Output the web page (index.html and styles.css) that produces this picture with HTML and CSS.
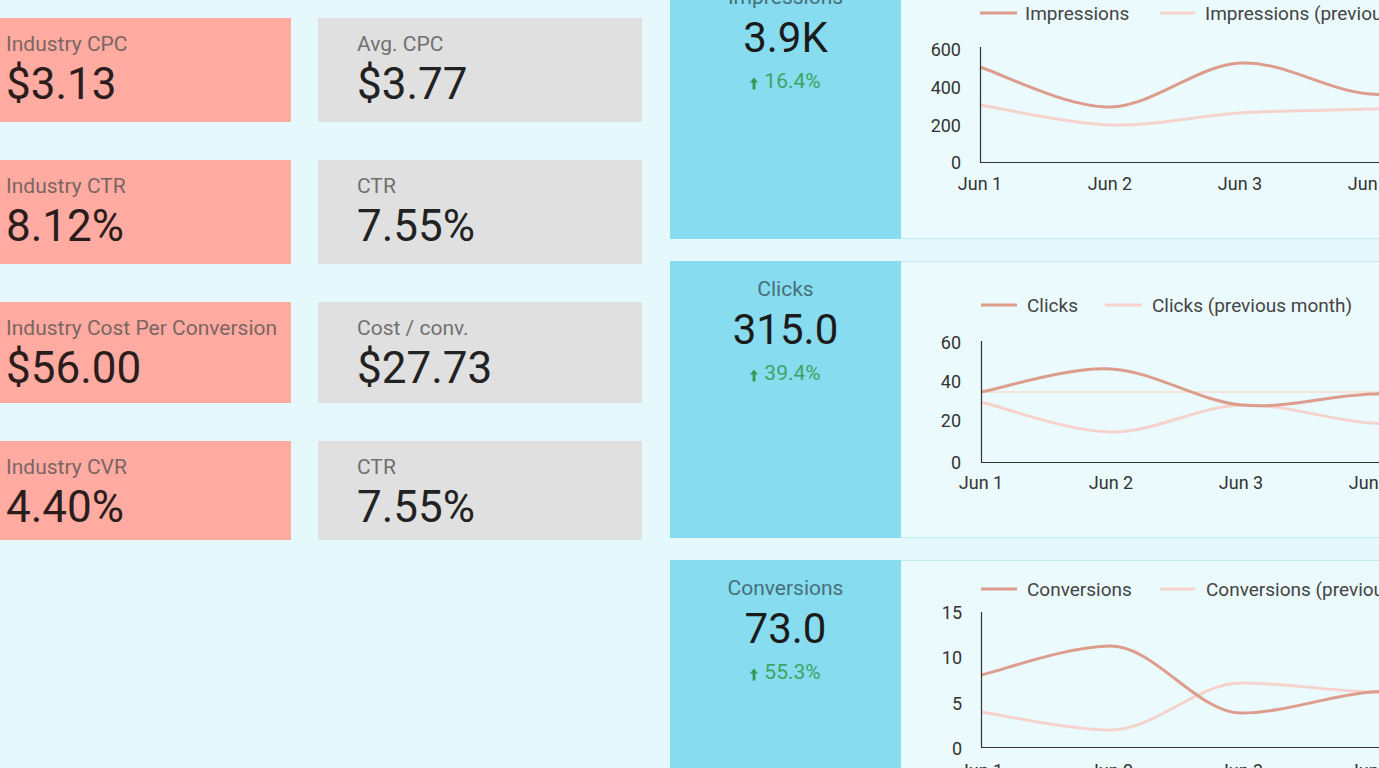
FILE: index.html
```html
<!DOCTYPE html>
<html lang="en">
<head>
<meta charset="utf-8">
<title>Benchmarks</title>
<link rel="stylesheet" href="styles.css">
</head>
<body>
<div class="page">
  <section class="benchmarks">
    <div class="card card-industry"><div class="card-label">Industry CPC</div><div class="card-value">$3.13</div></div>
    <div class="card card-account"><div class="card-label">Avg. CPC</div><div class="card-value">$3.77</div></div>
    <div class="card card-industry"><div class="card-label">Industry CTR</div><div class="card-value">8.12%</div></div>
    <div class="card card-account"><div class="card-label">CTR</div><div class="card-value">7.55%</div></div>
    <div class="card card-industry"><div class="card-label">Industry Cost Per Conversion</div><div class="card-value">$56.00</div></div>
    <div class="card card-account"><div class="card-label">Cost / conv.</div><div class="card-value">$27.73</div></div>
    <div class="card card-industry"><div class="card-label">Industry CVR</div><div class="card-value">4.40%</div></div>
    <div class="card card-account"><div class="card-label">CTR</div><div class="card-value">7.55%</div></div>
  </section>

  <section class="metrics">
    <div class="metric">
      <div class="scorecard scorecard-first">
        <div class="sc-label">Impressions</div>
        <div class="sc-value">3.9K</div>
        <div class="sc-delta"><svg class="arrow" viewBox="0 0 8 12" width="8" height="13"><path d="M4 0 L8 5 H5.4 V12 H2.6 V5 H0 Z"/></svg><span>16.4%</span></div>
      </div>
      <div class="chart">
        <svg class="plot" width="478" height="277" viewBox="0 0 478 277">
          <line class="leg-cur" x1="79" y1="51" x2="116" y2="51"/>
          <text class="legend" x="124" y="51">Impressions</text>
          <line class="leg-prev" x1="259" y1="51" x2="294" y2="51"/>
          <text class="legend" x="304" y="51">Impressions (previous month)</text>
          <text class="tick" x="60" y="87" text-anchor="end">600</text>
          <text class="tick" x="60" y="125" text-anchor="end">400</text>
          <text class="tick" x="60" y="163" text-anchor="end">200</text>
          <text class="tick" x="60" y="200" text-anchor="end">0</text>
          <path class="prev" d="M79,143 C101,146.3 166,161.7 209,163 C252,164.3 296,153.7 339,151 C382,148.3 426,148.2 469,147 C512,145.8 556,144 599,144"/>
          <path class="cur" d="M79,105 C101,112 166,145.7 209,145 C252,144.3 296,103.3 339,101 C382,98.7 426,128.8 469,132 C512,135.2 556,120 599,120"/>
          <path class="axis" d="M79.5,85 V200.5 H478"/>
          <text class="tick" x="79" y="221" text-anchor="middle">Jun 1</text>
          <text class="tick" x="209" y="221" text-anchor="middle">Jun 2</text>
          <text class="tick" x="339" y="221" text-anchor="middle">Jun 3</text>
          <text class="tick" x="469" y="221" text-anchor="middle">Jun 4</text>
        </svg>
      </div>
    </div>

    <div class="metric">
      <div class="scorecard">
        <div class="sc-label">Clicks</div>
        <div class="sc-value">315.0</div>
        <div class="sc-delta"><svg class="arrow" viewBox="0 0 8 12" width="8" height="13"><path d="M4 0 L8 5 H5.4 V12 H2.6 V5 H0 Z"/></svg><span>39.4%</span></div>
      </div>
      <div class="chart">
        <svg class="plot" width="478" height="277" viewBox="0 0 478 277">
          <line class="leg-cur" x1="80" y1="44" x2="116" y2="44"/>
          <text class="legend" x="126" y="44">Clicks</text>
          <line class="leg-prev" x1="204" y1="44" x2="241" y2="44"/>
          <text class="legend" x="251" y="44">Clicks (previous month)</text>
          <text class="tick" x="60" y="81" text-anchor="end">60</text>
          <text class="tick" x="60" y="120" text-anchor="end">40</text>
          <text class="tick" x="60" y="159" text-anchor="end">20</text>
          <text class="tick" x="60" y="201" text-anchor="end">0</text>
          <line class="ref" x1="80" y1="131" x2="478" y2="131"/>
          <path class="prev" d="M80,141 C101.7,146 166.7,170.5 210,171 C253.3,171.5 296.7,145.5 340,144 C383.3,142.5 426.7,159.3 470,162 C513.3,164.7 556.7,160 600,160"/>
          <path class="cur" d="M80,131 C101.7,127.2 166.7,105.8 210,108 C253.3,110.2 296.7,139.8 340,144 C383.3,148.2 426.7,134.8 470,133 C513.3,131.2 556.7,133 600,133"/>
          <path class="axis" d="M80.5,80 V201.5 H478"/>
          <text class="tick" x="80" y="221" text-anchor="middle">Jun 1</text>
          <text class="tick" x="210" y="221" text-anchor="middle">Jun 2</text>
          <text class="tick" x="340" y="221" text-anchor="middle">Jun 3</text>
          <text class="tick" x="470" y="221" text-anchor="middle">Jun 4</text>
        </svg>
      </div>
    </div>

    <div class="metric">
      <div class="scorecard">
        <div class="sc-label">Conversions</div>
        <div class="sc-value">73.0</div>
        <div class="sc-delta"><svg class="arrow" viewBox="0 0 8 12" width="8" height="13"><path d="M4 0 L8 5 H5.4 V12 H2.6 V5 H0 Z"/></svg><span>55.3%</span></div>
      </div>
      <div class="chart">
        <svg class="plot" width="478" height="277" viewBox="0 0 478 277">
          <line class="leg-cur" x1="80" y1="29" x2="116" y2="29"/>
          <text class="legend" x="126" y="29">Conversions</text>
          <line class="leg-prev" x1="259" y1="29" x2="294" y2="29"/>
          <text class="legend" x="305" y="29">Conversions (previous month)</text>
          <text class="tick" x="61" y="52" text-anchor="end">15</text>
          <text class="tick" x="61" y="97" text-anchor="end">10</text>
          <text class="tick" x="61" y="143" text-anchor="end">5</text>
          <text class="tick" x="61" y="188" text-anchor="end">0</text>
          <path class="prev" d="M80,152 C101.7,155 166.7,170 210,170 C253.3,170 296.7,123 340,123 C383.3,123 426.7,130.5 470,132 C513.3,133.5 556.7,132 600,132"/>
          <path class="cur" d="M80,115 C101.7,110.2 166.7,86 210,86 C253.3,86 296.7,153 340,153 C383.3,153 426.7,135.8 470,132 C513.3,128.2 556.7,130 600,130"/>
          <path class="axis" d="M80.5,52 V187.5 H478"/>
          <text class="tick" x="80" y="210" text-anchor="middle">Jun 1</text>
          <text class="tick" x="210" y="210" text-anchor="middle">Jun 2</text>
          <text class="tick" x="340" y="210" text-anchor="middle">Jun 3</text>
          <text class="tick" x="470" y="210" text-anchor="middle">Jun 4</text>
        </svg>
      </div>
    </div>
  </section>
</div>
</body>
</html>
```

FILE: styles.css
```css
html, body {
  margin: 0;
  padding: 0;
}

body {
  background: #e5f8fc;
  font-family: Roboto, "Liberation Sans", Arial, sans-serif;
  overflow: hidden;
}

.page {
  display: flex;
  align-items: flex-start;
  width: 1379px;
  height: 768px;
  overflow: hidden;
}

/* Left benchmark cards */
.benchmarks {
  flex: none;
  display: grid;
  grid-template-columns: 291px 324px;
  grid-template-rows: 104px 104px 101px 99px;
  column-gap: 27px;
  row-gap: 38px;
  padding-top: 18px;
  margin-right: 28px;
}

.card {
  box-sizing: border-box;
  padding-top: 14px;
  white-space: nowrap;
  overflow: hidden;
}

.card-industry {
  background: #ffaba2;
  padding-left: 6px;
}

.card-account {
  background: #e0e0e0;
  padding-left: 39px;
}

.card-label {
  font-size: 21px;
  line-height: 25px;
}

.card-industry .card-label {
  color: #7c6561;
}

.card-account .card-label {
  color: #717171;
}

.card-value {
  font-size: 44px;
  line-height: 50px;
  margin-top: 2px;
  color: #222;
}

.card-industry .card-value {
  color: #2a1d1b;
}

/* Right metric rows */
.metrics {
  flex: 1;
  display: flex;
  flex-direction: column;
  gap: 22px;
  margin-top: -38px;
}

.metric {
  display: flex;
  height: 277px;
}

.scorecard {
  flex: none;
  width: 231px;
  box-sizing: border-box;
  background: #87dcef;
  text-align: center;
  padding-top: 16px;
}

.scorecard-first {
  padding-top: 23px;
}

.sc-label {
  font-size: 21px;
  line-height: 24px;
  color: #46707b;
}

.sc-value {
  font-size: 42px;
  line-height: 44px;
  margin-top: 7px;
  color: #1b1b1b;
}

.sc-delta {
  display: flex;
  justify-content: center;
  align-items: center;
  gap: 6px;
  margin-top: 9px;
  font-size: 21px;
  line-height: 24px;
  color: #3ca563;
}

.arrow {
  fill: #2f9a52;
  margin-top: 4px;
}

.chart {
  flex: 1;
  background: #ebfafd;
  box-shadow: inset 0 1px #c2e9f1, inset 0 -1px #c2e9f1;
  overflow: hidden;
}

.plot {
  display: block;
}

.plot text {
  font-family: Roboto, "Liberation Sans", Arial, sans-serif;
  dominant-baseline: central;
}

.legend {
  font-size: 19px;
  fill: #444;
}

.tick {
  font-size: 18px;
  fill: #333;
}

.axis {
  fill: none;
  stroke: #333;
  stroke-width: 1.2;
}

.cur {
  fill: none;
  stroke: #dd9d8c;
  stroke-width: 3;
}

.prev {
  fill: none;
  stroke: #f5d3cc;
  stroke-width: 3;
}

.ref {
  stroke: #f4e4de;
  stroke-width: 2;
}

.leg-cur {
  stroke: #dd9d8c;
  stroke-width: 3;
}

.leg-prev {
  stroke: #f5d3cc;
  stroke-width: 3;
}
```
